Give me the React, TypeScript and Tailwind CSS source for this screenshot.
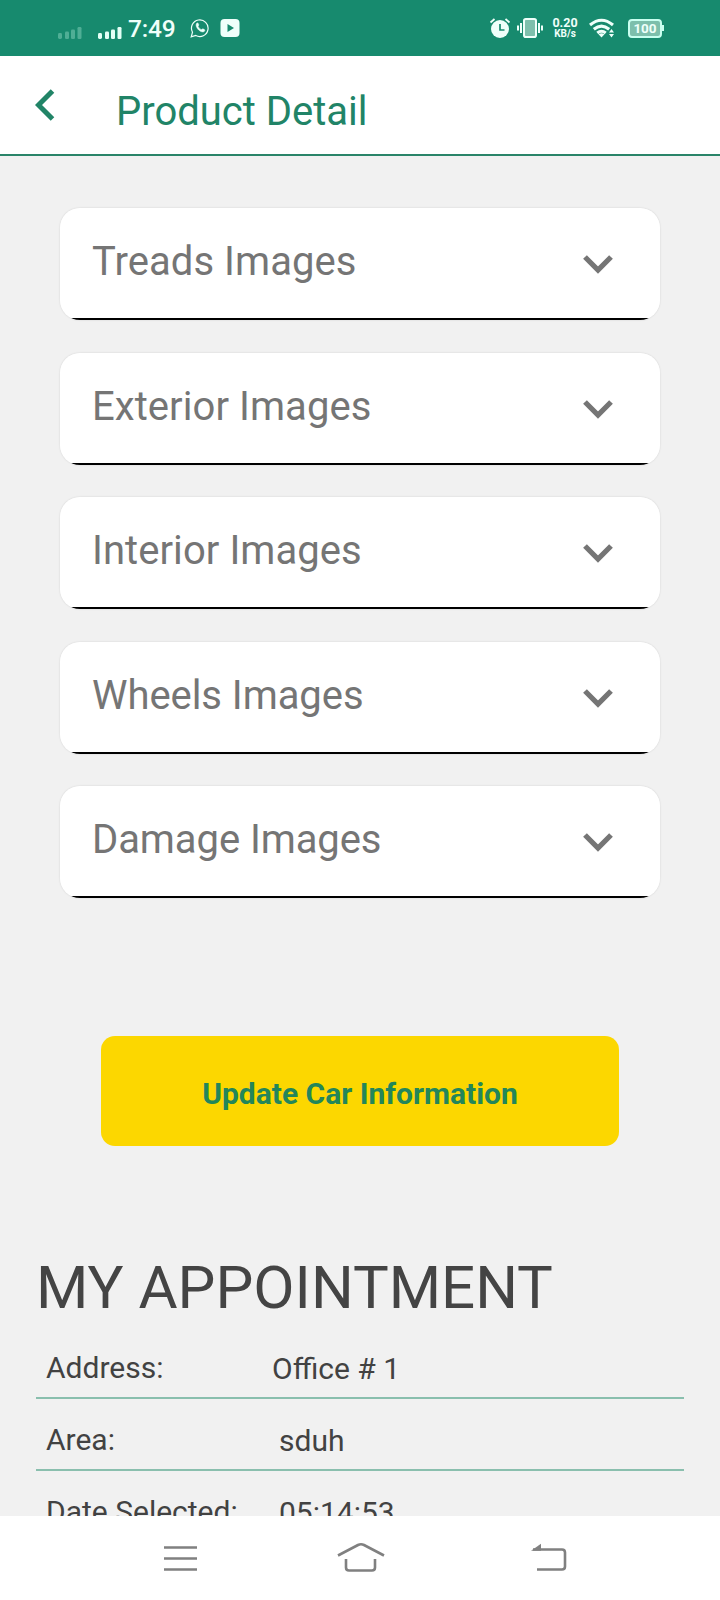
const sections = [
  { name: 'Treads Images', gap: 'tracking-[0.06px]' },
  { name: 'Exterior Images', gap: 'mt-[33px] tracking-[0.06px]' },
  { name: 'Interior Images', gap: 'mt-8 tracking-[0.06px]' },
  { name: 'Wheels Images', gap: 'mt-[33px] tracking-[-0.06px]' },
  { name: 'Damage Images', gap: 'mt-8 tracking-[-0.08px]' },
];

function Signal({ className }: { className: string }) {
  return (
    <svg viewBox="0 0 24 12" className={`h-3 w-6 ${className}`} fill="currentColor">
      <rect x="0" y="6" width="4" height="6" rx="1.4" />
      <rect x="7" y="4.5" width="4" height="7.5" rx="1.2" />
      <rect x="13" y="2.5" width="4" height="9.5" rx="1.2" />
      <rect x="19.5" y="0" width="4" height="12" rx="1.2" />
    </svg>
  );
}

function StatusBar() {
  return (
    <header className="flex h-14 shrink-0 items-center bg-[#178a6e] pl-[58px] text-[#effffa]">
      <Signal className="mt-[9px] text-[#4fae95]" />
      <Signal className="mt-[9px] ml-4 text-[#e4fff6]" />
      <span className="mt-[2px] ml-[6px] w-[62px] text-[24.5px] leading-none font-medium tracking-[-0.2px] whitespace-nowrap">7:49</span>
      <svg viewBox="0 0 20 20" className="h-5 w-5 shrink-0" fill="none" stroke="currentColor" strokeWidth="1.2">
        <path d="M1.2 18.8 2.5 14.2A8.3 8.3 0 1 1 5.8 17.5Z" />
        <path d="M6.7 5.3c.7-.7 1.4-.3 1.7.5l.4 1.1c.1.7-.8 1-.7 1.5.6 1.4 1.8 2.6 3.2 3.2.6.2 1-.9 1.6-.8l1.5.8c.7.4.4 1.4-.2 1.9-1.2 1-3.7.2-5.5-1.5S5.2 7.2 6.7 5.3Z" fill="currentColor" strokeWidth="0.5" />
      </svg>
      <svg viewBox="0 0 20 18" className="ml-[10px] h-[18px] w-5 shrink-0">
        <rect x="0.5" width="19" height="18" rx="4" fill="currentColor" />
        <path d="M7.5 5v8l6.5-4Z" fill="#178a6e" />
      </svg>
      <div className="ml-[249px] flex items-center">
        <svg viewBox="0 0 22 20" className="h-5 w-[22px]" fill="none" stroke="currentColor">
          <circle cx="11" cy="11" r="9" fill="currentColor" stroke="none" />
          <path d="M1.5 4.5 5.5 1M16.5 1l4 3.5" strokeWidth="1.8" />
          <path d="M11 6v6h4.5" stroke="#178a6e" strokeWidth="1.7" />
        </svg>
        <svg viewBox="0 0 26 20" className="ml-[6px] h-5 w-[26px]" fill="none" stroke="currentColor" strokeWidth="2">
          <rect x="7" y="1" width="12" height="18" rx="1.8" fill="#7dbfac" />
          <path d="M4 5v10M1 7.5v5M22 5v10M25 7.5v5" />
        </svg>
        <div className="ml-[8px] flex w-[28px] flex-col items-center text-center font-bold whitespace-nowrap">
          <span className="text-[12.5px] leading-[12px]">0.20</span>
          <span className="text-[10px] leading-[10px]">KB/s</span>
        </div>
        <svg viewBox="0 0 26 20" className="ml-[10px] h-5 w-[26px]" fill="none" stroke="currentColor" strokeWidth="3.1">
          <path d="M1 7Q12.500-2.500 24 7M4.800 11.300Q12.500 4.800 20.200 11.300M8.300 15Q12.500 11.500 16.700 15" />
          <path d="M9.500 16.200Q12.500 14.500 15.500 16.200L12.500 19.500Z" fill="currentColor" stroke="none" />
          <path d="m22.500 11 2.500 3.500h-5ZM22.500 19.500l2.500-3.500h-5Z" fill="currentColor" stroke="none" />
        </svg>
        <div className="ml-[13px] flex h-[19px] w-[34px] items-center justify-center rounded-[4px] border-2 border-[#c9fff0] bg-[#7dbfac] pt-[2px] text-[13.5px] leading-none font-bold">100</div>
        <div className="h-[6px] w-[2px] bg-[#c9fff0]" />
      </div>
    </header>
  );
}

function Row({ label, value, inset }: { label: string; value: string; inset: string }) {
  return (
    <div className="flex h-[72px] shrink-0 items-start border-b-2 border-[#8abfae] pl-[10px] text-[30px] leading-9 whitespace-nowrap text-[#424242]">
      <span className="w-[226px] pt-[23px]">{label}</span>
      <span className={`pt-[24px] ${inset}`}>{value}</span>
    </div>
  );
}

export default function App() {
  return (
    <div className="flex h-[1600px] w-[720px] flex-col overflow-hidden bg-[#f1f1f1] font-['Roboto',sans-serif]">
      <StatusBar />
      <div className="flex h-[100px] shrink-0 items-start border-b-2 border-[#2a8469] bg-white pl-[35px]">
        <svg viewBox="0 0 20 32" className="mt-[33px] h-8 w-5" fill="none" stroke="#218467" strokeWidth="5">
          <path d="M17.500 2 3.500 16l14 14" />
        </svg>
        <h1 className="mt-8 ml-[61px] text-[40px] leading-[48px] whitespace-nowrap text-[#218467]">Product Detail</h1>
      </div>
      <main className="flex min-h-0 flex-1 flex-col overflow-hidden pt-[52px]">
        <div className="flex shrink-0 flex-col px-[60px]">
          {sections.map(({ name, gap }) => (
            <div key={name} className={`h-28 rounded-[20px] shadow-[0_0_2px_rgba(0,0,0,0.15)] ${gap}`}>
              <button className="flex h-28 w-[600px] flex-col overflow-hidden rounded-[20px] bg-white">
                <span className="flex h-[110px] w-full items-start justify-between pr-[46px] pl-8">
                  <span className="mt-[30px] text-[40px] leading-[48px] whitespace-nowrap text-[#757575]">{name}</span>
                  <svg viewBox="0 0 32 20" className="mt-[46px] h-5 w-8" fill="none" stroke="#757575" strokeWidth="5.3">
                    <path d="m3 3 13 13L29 3" />
                  </svg>
                </span>
                <span className="h-[2px] w-full bg-black" />
              </button>
            </div>
          ))}
        </div>
        <button className="mt-[138px] ml-[101px] h-[110px] w-[518px] shrink-0 rounded-[14px] bg-[#fcd700] pt-[6px] text-[30px] leading-[46px] font-bold whitespace-nowrap text-[#23865a]">
          Update Car Information
        </button>
        <h2 className="mt-[106px] ml-9 h-[75px] shrink-0 text-[60px] leading-[72px] whitespace-nowrap text-[#444444]">MY APPOINTMENT</h2>
        <div className="flex shrink-0 flex-col px-9">
          <Row label="Address:" value="Office # 1" inset="" />
          <Row label="Area:" value="sduh" inset="pl-[7px]" />
          <Row label="Date Selected:" value="05:14:53" inset="pl-[7px]" />
        </div>
      </main>
      <nav className="flex h-[84px] shrink-0 items-start bg-white pt-[26px]">
        <svg viewBox="0 0 34 32" className="ml-[163px] h-8 w-[34px]" stroke="#808080" strokeWidth="2.6">
          <path d="M1 5.500h33M1 16.500h33M1 27.500h33" />
        </svg>
        <svg viewBox="0 0 48 32" className="ml-[140px] h-8 w-12" fill="none" stroke="#808080" strokeWidth="2.6">
          <path d="M1 13.500 21 3Q24 1.500 27 3L47 13.500M9 17v8.500q0 3 3 3h23q3 0 3-3V17" />
        </svg>
        <svg viewBox="0 0 36 32" className="ml-[146px] h-8 w-9" fill="none" stroke="#808080" strokeWidth="2.6">
          <path d="M2 7.500h29q3 0 3 3v14q0 3-3 3H6" />
          <path d="m0 8.800 10-7v7Z" fill="#808080" stroke="none" />
        </svg>
      </nav>
    </div>
  );
}
